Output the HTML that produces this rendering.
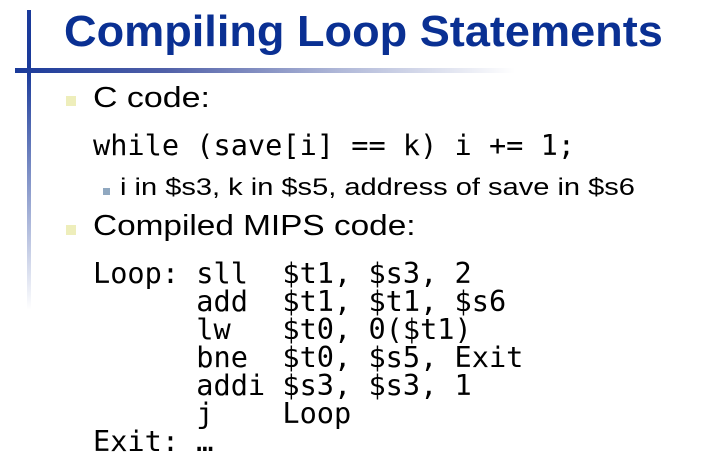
<html><head><style>
body{margin:0;width:718px;height:469px;background:#fff;position:relative;overflow:hidden;font-family:"Liberation Sans",sans-serif}
.a{position:absolute;white-space:pre;line-height:1;transform-origin:0 0}
.m{font-family:"DejaVu Sans Mono","Liberation Mono",monospace;font-size:28.6px}
</style></head><body>
<div style="position:absolute;left:27px;top:10px;width:4px;height:300px;background:linear-gradient(#1a3a9a,#1a3a9a 20%,#fff)"></div>
<div style="position:absolute;left:15px;top:68px;width:500px;height:5px;background:linear-gradient(90deg,#1a3a9a,#5060a8 30%,#b0b8d8 65%,#fff)"></div>
<div class="a" style="left:64px;top:10px;font-size:44px;font-weight:bold;color:#0a3093;transform:scaleX(1.025)">Compiling Loop Statements</div>
<div style="position:absolute;left:66px;top:96px;width:10px;height:10px;background:#eeeebb"></div>
<div class="a" style="left:93px;top:84px;font-size:29px;transform:scaleX(1.17)">C code:</div>
<div class="a m" style="left:93px;top:131px">while (save[i] == k) i += 1;</div>
<div style="position:absolute;left:103px;top:188px;width:7px;height:7px;background:#90a8c0"></div>
<div class="a" style="left:120px;top:176px;font-size:24px;transform:scaleX(1.21)">i in $s3, k in $s5, address of save in $s6</div>
<div style="position:absolute;left:66px;top:225px;width:10px;height:10px;background:#eeeebb"></div>
<div class="a" style="left:93px;top:212px;font-size:29px;transform:scaleX(1.15)">Compiled MIPS code:</div>
<div class="a m" style="left:93px;top:259px;line-height:28px">Loop: sll  $t1, $s3, 2
      add  $t1, $t1, $s6
      lw   $t0, 0($t1)
      bne  $t0, $s5, Exit
      addi $s3, $s3, 1
      j    Loop
Exit: …</div>
</body></html>
